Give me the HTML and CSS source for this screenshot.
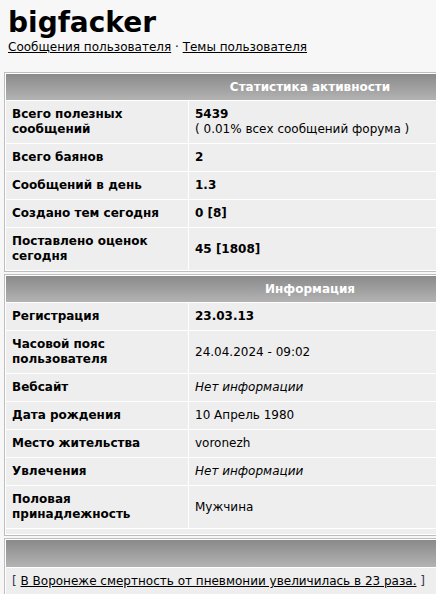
FILE: index.html
```html
<!DOCTYPE html>
<html lang="ru">
<head>
<meta charset="utf-8">
<title>bigfacker</title>
<link rel="stylesheet" href="styles.css">
</head>
<body>
<div class="page">
  <div class="userhead">
    <h1 class="title">bigfacker</h1>
    <div class="links"><a href="#">Сообщения пользователя</a> · <a href="#">Темы пользователя</a></div>
  </div>

  <table class="box">
    <colgroup><col class="c-key"><col class="c-val"></colgroup>
    <tr><th colspan="2" class="cap">Статистика активности</th></tr>
    <tr><td class="key">Всего полезных сообщений</td><td class="val"><b>5439</b><br>( 0.01% всех сообщений форума )</td></tr>
    <tr><td class="key">Всего баянов</td><td class="val"><b>2</b></td></tr>
    <tr><td class="key">Сообщений в день</td><td class="val"><b>1.3</b></td></tr>
    <tr><td class="key">Создано тем сегодня</td><td class="val"><b>0 [8]</b></td></tr>
    <tr><td class="key">Поставлено оценок сегодня</td><td class="val"><b>45 [1808]</b></td></tr>
  </table>

  <table class="box">
    <colgroup><col class="c-key"><col class="c-val"></colgroup>
    <tr><th colspan="2" class="cap">Информация</th></tr>
    <tr><td class="key">Регистрация</td><td class="val"><b>23.03.13</b></td></tr>
    <tr><td class="key">Часовой пояс пользователя</td><td class="val">24.04.2024 - 09:02</td></tr>
    <tr><td class="key">Вебсайт</td><td class="val"><i>Нет информации</i></td></tr>
    <tr><td class="key">Дата рождения</td><td class="val">10 Апрель 1980</td></tr>
    <tr><td class="key">Место жительства</td><td class="val">voronezh</td></tr>
    <tr><td class="key">Увлечения</td><td class="val"><i>Нет информации</i></td></tr>
    <tr><td class="key">Половая принадлежность</td><td class="val">Мужчина</td></tr>
    <tr><td colspan="2" class="spacer"></td></tr>
  </table>

  <table class="box">
    <tr><th class="cap cap-tall"></th></tr>
    <tr><td class="foot"><span class="br">[</span> <a href="#">В Воронеже смертность от пневмонии увеличилась в 23 раза.</a> <span class="br">]</span></td></tr>
  </table>
</div>
</body>
</html>
```

FILE: styles.css
```css
html, body {
  margin: 0;
  padding: 0;
  background: #f7f7f7;
}

body {
  font-family: "DejaVu Sans", Verdana, sans-serif;
  font-size: 12px;
  color: #000;
}

.page {
  width: 612px;
  padding: 4px;
}

.userhead {
  padding: 2px 0 0 4px;
  margin-bottom: 17px;
}

.title {
  margin: 0;
  font-size: 28px;
  line-height: 34px;
  font-weight: bold;
  color: #000;
}

.links {
  line-height: 15px;
}

.links a, .foot a {
  color: #000;
  text-decoration: underline;
}

.box {
  width: 612px;
  border: 1px solid #bdbdbd;
  border-spacing: 1px;
  background: #fff;
  margin: 0 0 2px 0;
  table-layout: fixed;
}

.c-key {
  width: 182px;
}

.cap {
  height: 26px;
  padding: 0;
  background: linear-gradient(#8a8a8a, #b3b3b3);
  color: #fff;
  font-weight: bold;
  text-align: center;
  line-height: 15px;
}

.cap-tall {
  height: 27px;
}

.key, .val, .foot {
  background: #eeeeee;
  padding: 6px;
  line-height: 15px;
  vertical-align: middle;
  text-align: left;
}

.key {
  font-weight: bold;
}

.spacer {
  height: 5px;
  padding: 0;
  background: #eeeeee;
}

.br {
  color: #333355;
}
```
